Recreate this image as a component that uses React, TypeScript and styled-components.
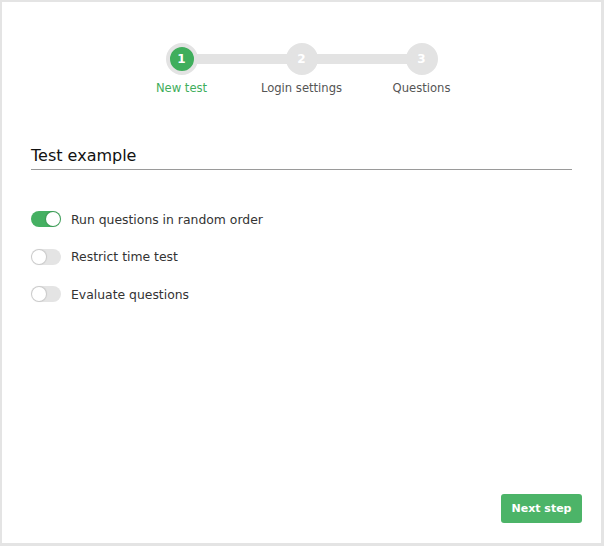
import styled, { createGlobalStyle } from "styled-components";

const GlobalStyle = createGlobalStyle`
  html, body {
    margin: 0;
    padding: 0;
    background: #e4e4e4;
  }
  body {
    font-family: "DejaVu Sans", Verdana, sans-serif;
  }
`;

const STEPS = ["New test", "Login settings", "Questions"];

const OPTIONS = [
  { label: "Run questions in random order", on: true },
  { label: "Restrict time test", on: false },
  { label: "Evaluate questions", on: false },
];

const App = () => {
  return (
    <>
      <GlobalStyle />
      <Page>
        <Card>
          <Stepper>
            {STEPS.map((label, i) => (
              <Step key={label} $first={i === 0} $last={i === STEPS.length - 1}>
                <Dot $active={i === 0}>{i + 1}</Dot>
                <StepLabel $active={i === 0}>{label}</StepLabel>
              </Step>
            ))}
          </Stepper>

          <TitleField>Test example</TitleField>

          <OptionList>
            {OPTIONS.map(({ label, on }) => (
              <OptionRow key={label}>
                <Toggle $on={on} />
                <span>{label}</span>
              </OptionRow>
            ))}
          </OptionList>

          <Footer>
            <NextButton>Next step</NextButton>
          </Footer>
        </Card>
      </Page>
    </>
  );
};

export default App;

const Page = styled.div`
  width: 604px;
  height: 546px;
  padding: 2px 3px 3px 2px;
  box-sizing: border-box;
`;

const Card = styled.div`
  width: 100%;
  height: 100%;
  background: #fff;
  box-sizing: border-box;
  padding: 41px 29px 20px 29px;

  display: flex;
  flex-direction: column;
`;

const Stepper = styled.div`
  display: flex;
  justify-content: center;
`;

const Step = styled.div<{ $first: boolean; $last: boolean }>`
  width: 120px;
  position: relative;

  display: flex;
  flex-direction: column;
  align-items: center;

  &::before {
    content: "";
    position: absolute;
    top: 11px;
    height: 10px;
    left: ${({ $first }) => ($first ? "50%" : "0")};
    right: ${({ $last }) => ($last ? "50%" : "0")};
    background: #e3e3e3;
  }
`;

const Dot = styled.div<{ $active: boolean }>`
  position: relative;
  width: 24px;
  height: 24px;
  border-radius: 50%;
  border: 4px solid #e3e3e3;
  background: ${({ $active }) => ($active ? "#3fae5c" : "#e3e3e3")};
  color: #fff;

  display: flex;
  align-items: center;
  justify-content: center;

  font-size: 12px;
  font-weight: 700;
`;

const StepLabel = styled.span<{ $active: boolean }>`
  margin-top: 6px;
  font-size: 11.6px;
  color: ${({ $active }) => ($active ? "#3fae5c" : "#555")};
`;

const TitleField = styled.div`
  margin-top: 51px;
  padding: 0 0 4px 0;
  border-bottom: 1px solid #9a9a9a;
  font-size: 16px;
  color: #111;
`;

const OptionList = styled.div`
  margin-top: 40px;
  display: flex;
  flex-direction: column;
  gap: 19.5px;
`;

const OptionRow = styled.label`
  display: flex;
  align-items: center;
  gap: 10px;
  font-size: 12.4px;
  color: #333;
  height: 18px;
`;

const Toggle = styled.span<{ $on: boolean }>`
  position: relative;
  width: 30px;
  height: 16px;
  border-radius: 8px;
  background: ${({ $on }) => ($on ? "#45b062" : "#e4e4e4")};

  &::after {
    content: "";
    position: absolute;
    top: 1px;
    left: ${({ $on }) => ($on ? "15px" : "1px")};
    width: 14px;
    height: 14px;
    border-radius: 50%;
    background: #fff;
    box-shadow: 0 0 1px 1px rgba(0, 0, 0, 0.12);
  }
`;

const Footer = styled.div`
  margin-top: auto;
  margin-right: -10px;
  display: flex;
  justify-content: flex-end;
`;

const NextButton = styled.button`
  width: 81px;
  height: 29px;
  border: none;
  border-radius: 3px;
  background: #4cb468;
  color: #fff;
  font-family: "DejaVu Sans", Verdana, sans-serif;
  font-size: 11px;
  font-weight: 700;
  cursor: pointer;
`;
